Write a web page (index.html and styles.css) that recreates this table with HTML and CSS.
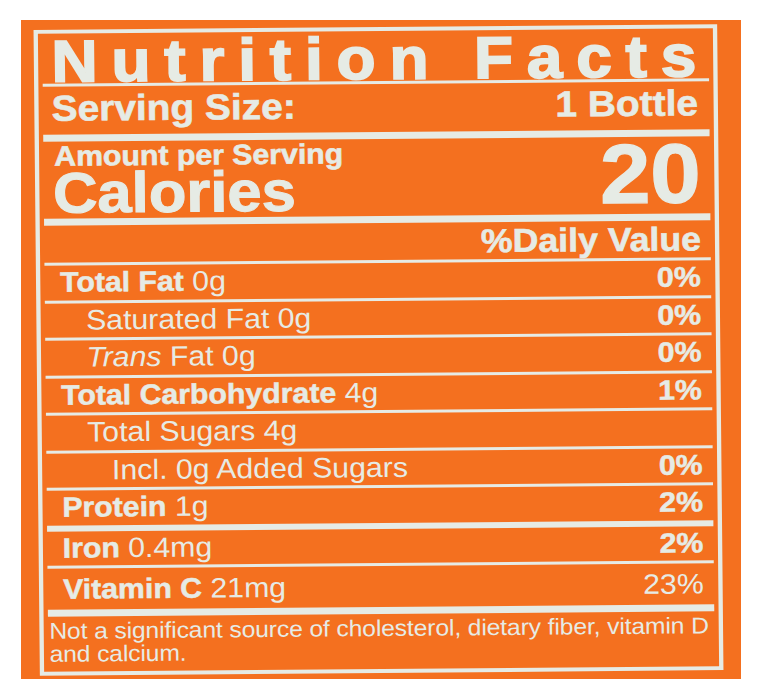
FILE: index.html
```html
<!DOCTYPE html>
<html lang="en">
<head>
<meta charset="utf-8">
<title>Nutrition Facts</title>
<link rel="stylesheet" href="styles.css">
</head>
<body>
<div class="panel">
  <div class="label">
    <div class="title">Nutrition Facts</div>
    <div class="serving"><span>Serving Size:</span><span>1 Bottle</span></div>
    <div class="calories">
      <div class="cal-left">
        <div class="amount">Amount per Serving</div>
        <div class="cal-word">Calories</div>
      </div>
      <div class="cal-num">20</div>
    </div>
    <div class="dv">%Daily Value</div>
    <div class="row"><span><b>Total Fat</b> 0g</span><b>0%</b></div>
    <div class="row sub"><span>Saturated Fat 0g</span><b>0%</b></div>
    <div class="row sub"><span><i>Trans</i> Fat 0g</span><b>0%</b></div>
    <div class="row"><span><b>Total Carbohydrate</b> 4g</span><b>1%</b></div>
    <div class="row sub"><span>Total Sugars 4g</span></div>
    <div class="row sub2"><span>Incl. 0g Added Sugars</span><b>0%</b></div>
    <div class="row thick"><span><b>Protein</b> 1g</span><b>2%</b></div>
    <div class="row"><span><b>Iron</b> 0.4mg</span><b>2%</b></div>
    <div class="row vit"><span><b>Vitamin C</b> 21mg</span><span>23%</span></div>
    <div class="foot">Not a significant source of cholesterol, dietary fiber, vitamin D<br>and calcium.</div>
  </div>
</div>
</body>
</html>
```
FILE: styles.css
```css
html, body {
  margin: 0;
  padding: 0;
  background: #ffffff;
}

body {
  width: 762px;
  height: 700px;
  overflow: hidden;
  font-family: "Liberation Sans", Arial, sans-serif;
}

.panel {
  margin: 20px 0 0 21px;
  width: 720px;
  height: 659px;
  background: #f4701f;
  padding: 7px 0 0 40.8px;
  box-sizing: border-box;
}

.label {
  width: 633px;
  box-sizing: border-box;
  border: 4px solid #e6ebe5;
  padding: 0 4.5px 0 4px;
  color: #e6ebe5;
  transform: scaleX(1.08) rotate(-0.52deg);
  transform-origin: 50% 50%;
}

.title {
  height: 50px;
  line-height: 57px;
  font-size: 59px;
  font-weight: 700;
  letter-spacing: 12.9px;
  padding-left: 8.4px;
  white-space: nowrap;
  -webkit-text-stroke: 1.8px #e6ebe5;
  border-bottom: 3px solid #e6ebe5;
}

.serving {
  display: flex;
  justify-content: space-between;
  font-size: 36px;
  font-weight: 700;
  line-height: 44px;
  padding: 0 10px 3.5px 8px;
  -webkit-text-stroke: 0.6px #e6ebe5;
  border-bottom: 7px solid #e6ebe5;
}

.calories {
  display: flex;
  justify-content: space-between;
  align-items: flex-start;
  font-weight: 700;
  padding: 0 8px 3.5px 8.5px;
  -webkit-text-stroke: 0.6px #e6ebe5;
  border-bottom: 7px solid #e6ebe5;
}

.amount {
  font-size: 28px;
  line-height: 30px;
  padding-left: 1.5px;
}

.cal-word {
  font-size: 57px;
  line-height: 43px;
  -webkit-text-stroke: 1px #e6ebe5;
}

.cal-num {
  font-size: 84px;
  line-height: 74px;
  -webkit-text-stroke: 1.2px #e6ebe5;
}

.dv {
  height: 37px;
  line-height: 37px;
  font-size: 33px;
  font-weight: 700;
  text-align: right;
  padding-right: 8.5px;
  -webkit-text-stroke: 0.6px #e6ebe5;
  border-bottom: 3px solid #e6ebe5;
}

.row {
  display: flex;
  justify-content: space-between;
  font-size: 28px;
  line-height: 34.5px;
  padding: 0 9px 0 14.3px;
  border-bottom: 3px solid #e6ebe5;
  white-space: nowrap;
}

.row b {
  font-weight: 700;
  -webkit-text-stroke: 0.5px #e6ebe5;
}

.row.sub {
  padding-left: 38px;
}

.row.sub2 {
  padding-left: 60.7px;
}

.row.thick {
  border-bottom-width: 6.5px;
}

.row.vit {
  line-height: 41px;
  border-bottom-width: 7px;
}

.foot {
  font-size: 22.8px;
  line-height: 23px;
  padding: 3px 0 5.5px 1.2px;
  white-space: nowrap;
  letter-spacing: -0.1px;
}
```
